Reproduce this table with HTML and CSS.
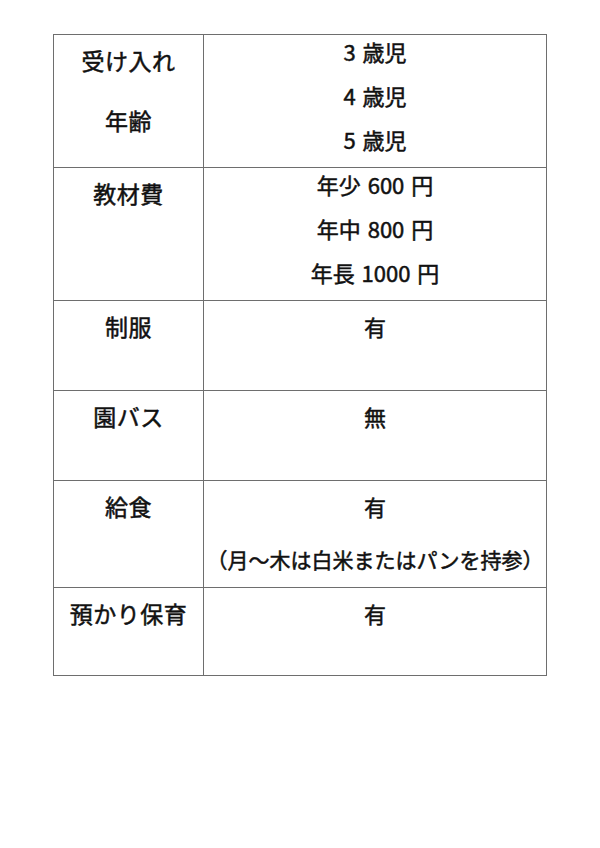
FILE: index.html
```html
<!DOCTYPE html>
<html lang="ja">
<head>
<meta charset="utf-8">
<title>園の概要</title>
<link rel="stylesheet" href="styles.css">
</head>
<body>
<table class="info">
  <tr class="r-tall">
    <th class="label"><div class="ln">受け入れ</div><div class="ln ln-far">年齢</div></th>
    <td class="value value-list"><div class="ln">3 歳児</div><div class="ln ln-next">4 歳児</div><div class="ln ln-next">5 歳児</div></td>
  </tr>
  <tr class="r-tall">
    <th class="label"><div class="ln">教材費</div></th>
    <td class="value value-list"><div class="ln">年少 600 円</div><div class="ln ln-next">年中 800 円</div><div class="ln ln-next">年長 1000 円</div></td>
  </tr>
  <tr class="r-short">
    <th class="label"><div class="ln">制服</div></th>
    <td class="value"><div class="ln">有</div></td>
  </tr>
  <tr class="r-short">
    <th class="label"><div class="ln">園バス</div></th>
    <td class="value"><div class="ln">無</div></td>
  </tr>
  <tr class="r-mid">
    <th class="label"><div class="ln">給食</div></th>
    <td class="value"><div class="ln">有</div><div class="ln ln-note">（月～木は白米またはパンを持参）</div></td>
  </tr>
  <tr class="r-last">
    <th class="label"><div class="ln">預かり保育</div></th>
    <td class="value"><div class="ln">有</div></td>
  </tr>
</table>
</body>
</html>
```

FILE: styles.css
```css
html, body {
  margin: 0;
  padding: 0;
  background: #ffffff;
}

body {
  font-family: "Noto Sans CJK JP", "Noto Sans", sans-serif;
  color: #111111;
}

.info {
  border-collapse: collapse;
  margin: 34px 0 0 53px;
  width: 494px;
  table-layout: fixed;
}

.info th,
.info td {
  border: 1px solid #6e6e6e;
  vertical-align: top;
  text-align: center;
  padding: 10px 0 0 0;
  font-size: 22px;
  font-weight: 400;
  -webkit-text-stroke: 0.5px #111111;
}

.info th.label {
  width: 149px;
  font-size: 23px;
  letter-spacing: 0.5px;
}

.ln {
  line-height: 30px;
  white-space: nowrap;
}

.ln-far {
  margin-top: 30px;
}

.value-list {
  padding-top: 1px !important;
  word-spacing: 2px;
}

.ln-next {
  margin-top: 14px;
}

.ln-note {
  margin-top: 23px;
  font-size: 21px;
}

.r-tall {
  height: 133px;
}

.r-short {
  height: 90px;
}

.r-mid {
  height: 107px;
}

.r-last {
  height: 88px;
}
```
